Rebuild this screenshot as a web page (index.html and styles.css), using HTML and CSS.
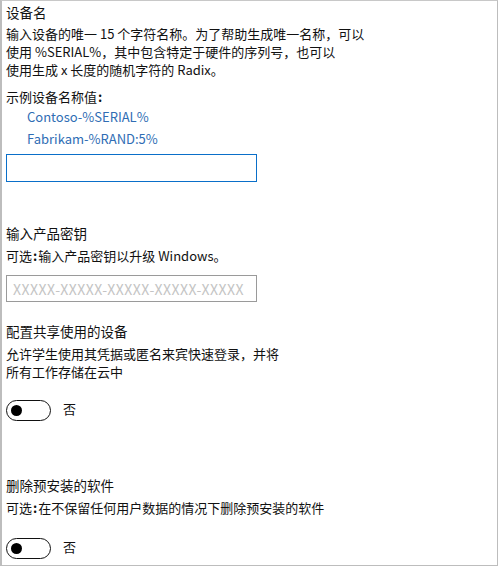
FILE: index.html
```html
<!DOCTYPE html>
<html lang="zh-CN">
<head>
<meta charset="utf-8">
<link rel="stylesheet" href="styles.css">
</head>
<body>
<div class="frame">
  <div class="heading first">设备名</div>
  <div class="desc">输入设备的唯一 15 个字符名称。为了帮助生成唯一名称，可以<br>使用 %SERIAL%，其中包含特定于硬件的序列号，也可以<br>使用生成 x 长度的随机字符的 Radix。</div>
  <div class="label">示例设备名称值<span class="colon">:</span></div>
  <div class="example">Contoso-%SERIAL%</div>
  <div class="example">Fabrikam-%RAND:5%</div>
  <div class="input active"></div>

  <div class="heading s2">输入产品密钥</div>
  <div class="desc d2">可选<span class="colon">:</span>输入产品密钥以升级 Windows。</div>
  <div class="input key"><span class="placeholder">XXXXX-XXXXX-XXXXX-XXXXX-XXXXX</span></div>

  <div class="heading s3">配置共享使用的设备</div>
  <div class="desc d2">允许学生使用其凭据或匿名来宾快速登录，并将<br>所有工作存储在云中</div>
  <div class="toggle-row t1"><span class="toggle"><span class="knob"></span></span><span class="toggle-label">否</span></div>

  <div class="heading s4">删除预安装的软件</div>
  <div class="desc d2">可选<span class="colon">:</span>在不保留任何用户数据的情况下删除预安装的软件</div>
  <div class="toggle-row t2"><span class="toggle"><span class="knob"></span></span><span class="toggle-label">否</span></div>
</div>
</body>
</html>
```
FILE: styles.css
```css
* { box-sizing: border-box; }
html, body { margin: 0; padding: 0; background: #fff; }
body {
  font-family: "Noto Sans CJK SC", "Noto Sans", sans-serif;
  font-size: 13px;
  color: #111;
}
.frame {
  width: 498px;
  height: 566px;
  border: 1px solid #bdbdbd;
  border-left-width: 2px;
  border-top: 1px solid #c8c8c8;
  padding: 0 4px 0 4px;
  overflow: hidden;
}
.colon { font-weight: 700; margin: 0 1px; }
.heading { line-height: 18px; font-size: 13.5px; }
.heading.first { margin-top: 2px; }
.desc { line-height: 18px; margin-top: 4px; }
.desc.d2 { margin-top: 5px; }
.label { line-height: 18px; margin-top: 9px; }
.example {
  line-height: 22px;
  padding-left: 21px;
  color: #2f6db4;
}
.input {
  width: 251px;
  height: 28px;
  margin-top: 4px;
  border: 1.5px solid #0a6fc9;
}
.input.key {
  margin-top: 10px;
  height: 27px;
  border: 1px solid #9a9a9a;
  display: flex;
  align-items: center;
  padding-left: 6px;
  overflow: hidden;
}
.placeholder { color: #c4c4c4; font-size: 14px; white-space: nowrap; letter-spacing: 0.5px; }
.s2 { margin-top: 42px; }
.s3 { margin-top: 20px; }
.s4 { margin-top: 55px; }
.toggle-row { display: flex; align-items: center; height: 21px; }
.t1 { margin-top: 19px; }
.t2 { margin-top: 21px; }
.toggle {
  width: 45px;
  height: 21px;
  border: 1.5px solid #111;
  border-radius: 11px;
  display: flex;
  align-items: center;
  padding-left: 4px;
}
.knob { width: 11px; height: 11px; border-radius: 50%; background: #000; }
.toggle-label { margin-left: 12px; margin-top: -4px; line-height: 18px; }
```
